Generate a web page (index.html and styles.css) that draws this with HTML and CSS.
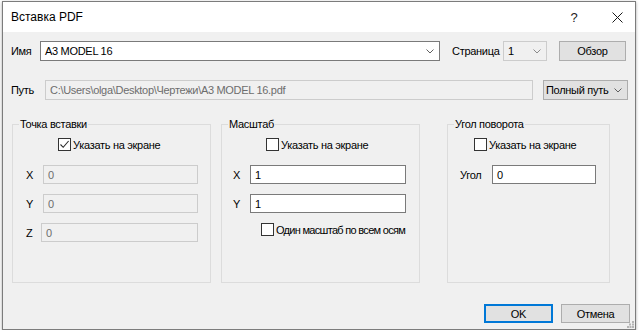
FILE: index.html
```html
<!DOCTYPE html>
<html lang="ru">
<head>
<meta charset="utf-8">
<title>Вставка PDF</title>
<link rel="stylesheet" href="styles.css">
</head>
<body>
<div class="window">
  <div class="titlebar">
    <span class="title">Вставка PDF</span>
    <span class="help">?</span>
    <span class="close"><svg width="11" height="11" viewBox="0 0 11 11"><path d="M0.5 0.5L10.5 10.5M10.5 0.5L0.5 10.5" stroke="#1a1a1a" stroke-width="1" fill="none"/></svg></span>
  </div>
  <div class="content">
    <div class="row row-name">
      <span class="lbl lbl-name">Имя</span>
      <div class="combo combo-name"><span class="val">A3 MODEL 16</span><svg class="chev" width="8" height="5" viewBox="0 0 8 5"><path d="M0.5 0.5L4 4L7.5 0.5" stroke="#606060" fill="none"/></svg></div>
      <span class="lbl lbl-page">Страница</span>
      <div class="combo combo-page"><span class="val">1</span><svg class="chev" width="8" height="5" viewBox="0 0 8 5"><path d="M0.5 0.5L4 4L7.5 0.5" stroke="#8a8a8a" fill="none"/></svg></div>
      <button class="btn btn-browse">Обзор</button>
    </div>
    <div class="row row-path">
      <span class="lbl lbl-path">Путь</span>
      <div class="field field-disabled field-path">C:\Users\olga\Desktop\Чертежи\A3 MODEL 16.pdf</div>
      <div class="combo combo-mode"><span class="val">Полный путь</span><svg class="chev" width="8" height="5" viewBox="0 0 8 5"><path d="M0.5 0.5L4 4L7.5 0.5" stroke="#606060" fill="none"/></svg></div>
    </div>
    <div class="groups">
      <fieldset class="group group-insert">
        <legend>Точка вставки</legend>
        <div class="check check-insert"><span class="box"><svg width="11" height="11" viewBox="0 0 11 11"><path d="M1.5 5.5L4.2 8.3L9.6 2" stroke="#2a2a2a" stroke-width="1.1" fill="none"/></svg></span><span>Указать на экране</span></div>
        <div class="frow frow-first"><span class="flbl w17">X</span><div class="field field-disabled w155">0</div></div>
        <div class="frow"><span class="flbl w17">Y</span><div class="field field-disabled w155">0</div></div>
        <div class="frow"><span class="flbl w15">Z</span><div class="field field-disabled w157">0</div></div>
      </fieldset>
      <fieldset class="group group-scale">
        <legend>Масштаб</legend>
        <div class="check check-scale"><span class="box"></span><span>Указать на экране</span></div>
        <div class="frow frow-first"><span class="flbl w17">X</span><div class="field w156">1</div></div>
        <div class="frow"><span class="flbl w17">Y</span><div class="field w156">1</div></div>
        <div class="check check-uniform"><span class="box"></span><span class="tight">Один масштаб по всем осям</span></div>
      </fieldset>
      <fieldset class="group group-angle">
        <legend>Угол поворота</legend>
        <div class="check check-angle"><span class="box"></span><span>Указать на экране</span></div>
        <div class="frow frow-first"><span class="flbl w32">Угол</span><div class="field w104">0</div></div>
      </fieldset>
    </div>
    <div class="footer">
      <button class="btn btn-ok">OK</button>
      <button class="btn btn-cancel">Отмена</button>
    </div>
  </div>
  <svg class="grip" width="7" height="7" viewBox="0 0 7 7"><g fill="#b4b4b4"><rect x="5" y="0" width="2" height="2"/><rect x="2" y="2.5" width="2" height="2"/><rect x="5" y="2.5" width="2" height="2"/><rect x="0" y="5" width="2" height="2"/><rect x="2.5" y="5" width="2" height="2"/><rect x="5" y="5" width="2" height="2"/></g></svg>
</div>
</body>
</html>
```
FILE: styles.css
```css
* { box-sizing: border-box; }
body {
  margin: 0;
  background: #ffffff;
  font-family: "Liberation Sans", Arial, sans-serif;
  font-size: 11px;
  letter-spacing: -0.3px;
  color: #000;
}
.window {
  position: relative;
  margin: 1px 0 0 2px;
  width: 634px;
  height: 329px;
  border: 1px solid #7c7c7c;
  background: #f0f0f0;
  box-shadow: 0 1px 3px rgba(0,0,0,0.35);
}
.titlebar {
  height: 30px;
  background: #fff;
  display: flex;
  align-items: center;
  padding-left: 8px;
  letter-spacing: 0;
}
.title {
  font-size: 12px;
  flex: 1;
  color: #000;
}
.help {
  width: 36px;
  text-align: center;
  font-size: 13px;
  margin-right: 7px;
  color: #222;
}
.close {
  width: 36px;
  display: flex;
  justify-content: center;
  align-items: center;
}
.content {
  padding: 9px 0 0 8px;
  white-space: nowrap;
}
.row {
  display: flex;
  align-items: center;
  height: 20px;
}
.row-path { margin-top: 19px; }
.lbl { display: block; }
.lbl-name { width: 29px; }
.lbl-page { width: 54px; margin-left: 9px; padding-left: 3px; }
.lbl-path { width: 34px; }
.combo {
  height: 20px;
  display: flex;
  align-items: center;
  justify-content: space-between;
  padding: 0 5px 0 5px;
}
.combo-name {
  width: 400px;
  background: #fff;
  border: 1px solid #7a7a7a;
  padding-left: 4px;
}
.combo-page {
  width: 44px;
  background: #f0f0f0;
  border: 1px solid #cccccc;
  padding-left: 4px;
}
.combo-mode {
  width: 85px;
  margin-left: 10px;
  background: #e1e1e1;
  border: 1px solid #adadad;
  padding-left: 2px;
}
.chev { display: block; flex: none; }
.btn {
  font-family: inherit;
  font-size: 11px;
  letter-spacing: -0.3px;
  color: #000;
  background: #e1e1e1;
  border: 1px solid #adadad;
  padding: 0;
  margin: 0;
  display: flex;
  align-items: center;
  justify-content: center;
}
.btn-browse {
  width: 67px;
  height: 20px;
  margin-left: 12px;
}
.field {
  height: 19px;
  background: #fff;
  border: 1px solid #7a7a7a;
  padding-left: 4px;
  display: flex;
  align-items: center;
  white-space: nowrap;
}
.field-disabled {
  background: #f0f0f0;
  border-color: #cccccc;
  color: #6d6d6d;
}
.field-path {
  width: 488px;
  height: 20px;
}
.groups {
  display: flex;
  margin-top: 18px;
  padding-left: 1px;
}
.group {
  margin: 0;
  padding: 0;
  border: 1px solid #dcdcdc;
  height: 165px;
  min-width: 0;
}
.group legend {
  margin-left: 6px;
  padding: 0 1px;
  line-height: 12px;
  font-size: 11px;
}
.group-insert { width: 199px; }
.group-scale { width: 199px; margin-left: 10px; }
.group-angle { width: 163px; margin-left: 27px; }
.check {
  display: flex;
  align-items: center;
  height: 13px;
  margin-top: 8px;
}
.box {
  width: 13px;
  height: 13px;
  border: 1px solid #333;
  background: #fff;
  margin-right: 2px;
  display: flex;
  align-items: center;
  justify-content: center;
  flex: none;
}
.tight { letter-spacing: -0.7px; }
.check-insert { padding-left: 45px; }
.check-scale { padding-left: 44px; }
.check-angle { padding-left: 26px; }
.check-uniform { padding-left: 39px; margin-top: 10px; }
.frow {
  display: flex;
  align-items: center;
  margin-top: 10px;
  padding-left: 13px;
}
.frow-first { margin-top: 14px; }
.group-scale .frow { padding-left: 11px; }
.group-angle .frow { padding-left: 12px; }
.flbl { display: block; }
.w15 { width: 15px; }
.w17 { width: 17px; }
.w32 { width: 32px; }
.w155 { width: 155px; }
.w156 { width: 156px; }
.w157 { width: 157px; }
.w104 { width: 104px; }
.footer {
  display: flex;
  justify-content: flex-end;
  gap: 8px;
  margin-top: 21px;
  padding-right: 5px;
}
.btn-ok, .btn-cancel {
  width: 69px;
  height: 19px;
}
.btn-ok {
  border: 2px solid #0078d7;
}
.grip {
  position: absolute;
  right: 1px;
  bottom: 1px;
}
```
